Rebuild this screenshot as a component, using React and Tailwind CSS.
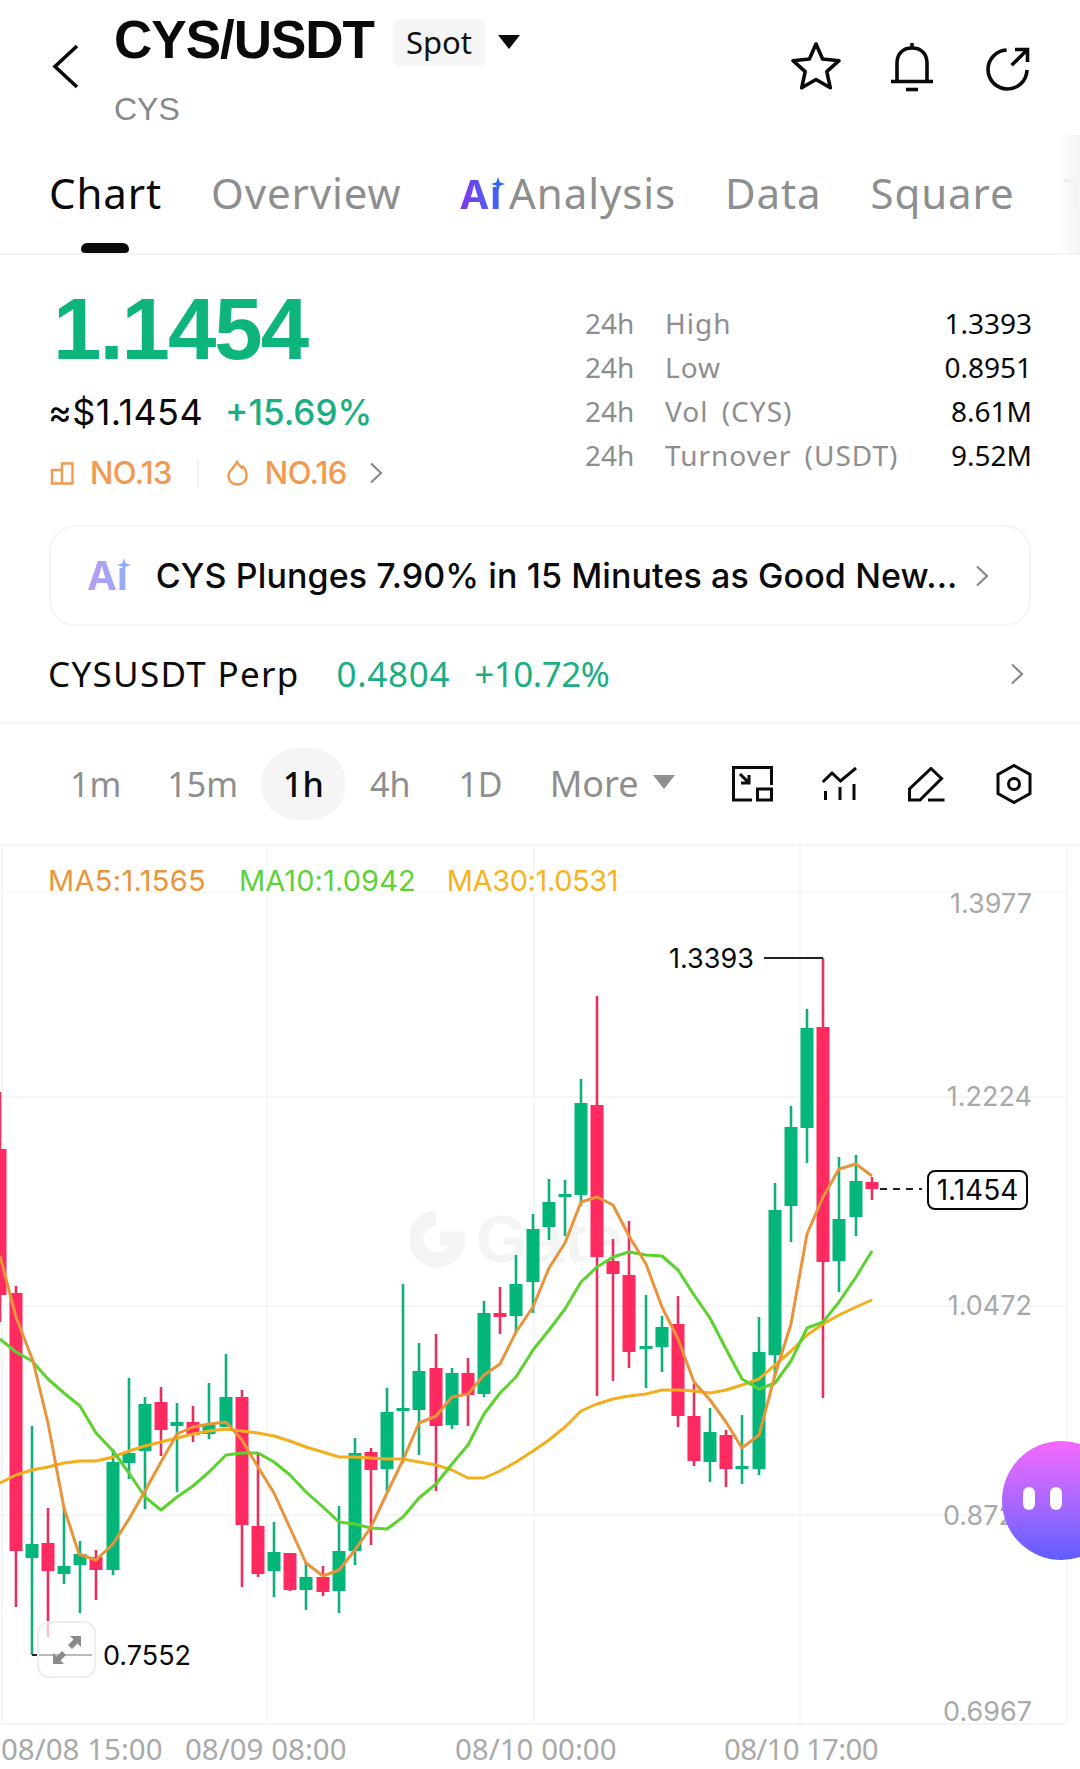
import React from 'react';

/* ─── Chart data (page coordinates) ─────────────────────────── */
// x, wick top, body top, body bottom, wick bottom, colour
const CANDLES = [
  [0, 1092, 1149, 1295, 1322, 'r'], [16, 1286, 1293, 1551, 1607, 'r'], [32, 1426, 1544, 1558, 1655, 'g'],
  [48, 1508, 1543, 1571, 1637, 'r'], [64, 1508, 1566, 1574, 1584, 'g'], [80, 1541, 1554, 1565, 1613, 'g'],
  [96, 1550, 1557, 1570, 1600, 'r'], [113, 1449, 1462, 1570, 1575, 'g'], [129, 1378, 1453, 1463, 1479, 'g'],
  [145, 1397, 1404, 1451, 1509, 'g'], [161, 1387, 1402, 1430, 1456, 'r'], [177, 1403, 1422, 1426, 1492, 'g'],
  [193, 1406, 1422, 1435, 1442, 'r'], [209, 1383, 1425, 1434, 1439, 'g'], [226, 1354, 1397, 1427, 1427, 'g'],
  [242, 1390, 1397, 1525, 1587, 'r'], [258, 1453, 1526, 1574, 1577, 'r'], [274, 1522, 1552, 1571, 1597, 'g'],
  [290, 1553, 1553, 1590, 1591, 'r'], [306, 1563, 1577, 1590, 1610, 'g'], [323, 1566, 1577, 1592, 1596, 'r'],
  [339, 1506, 1551, 1591, 1613, 'g'], [355, 1438, 1453, 1551, 1565, 'g'], [371, 1448, 1452, 1470, 1545, 'r'],
  [387, 1388, 1412, 1469, 1491, 'g'], [403, 1284, 1408, 1410, 1463, 'g'], [419, 1343, 1371, 1410, 1455, 'g'],
  [436, 1334, 1368, 1426, 1491, 'r'], [452, 1368, 1373, 1425, 1429, 'g'], [468, 1358, 1373, 1395, 1426, 'r'],
  [484, 1301, 1313, 1394, 1397, 'g'], [500, 1287, 1313, 1317, 1334, 'r'], [516, 1255, 1284, 1316, 1332, 'g'],
  [533, 1214, 1229, 1282, 1313, 'g'], [549, 1179, 1202, 1227, 1240, 'g'], [565, 1180, 1194, 1197, 1236, 'g'],
  [581, 1079, 1103, 1195, 1206, 'g'], [597, 996, 1105, 1257, 1396, 'r'], [613, 1239, 1261, 1274, 1381, 'r'],
  [629, 1221, 1275, 1352, 1368, 'r'], [646, 1295, 1346, 1349, 1388, 'g'], [662, 1316, 1327, 1347, 1372, 'g'],
  [678, 1296, 1324, 1416, 1427, 'r'], [694, 1384, 1416, 1461, 1466, 'r'], [710, 1408, 1432, 1462, 1482, 'g'],
  [726, 1430, 1435, 1469, 1487, 'r'], [742, 1415, 1466, 1468, 1484, 'g'], [759, 1317, 1352, 1469, 1475, 'g'],
  [775, 1183, 1210, 1355, 1376, 'g'], [791, 1106, 1127, 1206, 1242, 'g'], [807, 1009, 1028, 1128, 1163, 'g'],
  [823, 958, 1027, 1262, 1398, 'r'], [839, 1157, 1219, 1261, 1292, 'g'], [856, 1155, 1181, 1217, 1236, 'g'],
  [872, 1177, 1182, 1189, 1200, 'r'],
];

const MA5 = '0,1256 16,1317 33,1361 48,1423 64,1508 79,1554 96,1560 113,1544 129,1519 145,1491 161,1462 177,1434 193,1427 209,1424 226,1422 242,1440 258,1467 274,1493 290,1528 306,1563 323,1576 339,1570 355,1550 371,1527 387,1493 403,1460 419,1423 436,1416 452,1397 468,1394 484,1375 500,1364 516,1332 533,1307 549,1268 565,1243 581,1202 597,1197 613,1205 629,1236 646,1264 662,1307 678,1339 694,1382 710,1400 726,1422 742,1448 759,1435 775,1375 791,1324 807,1234 823,1197 839,1169 856,1164 872,1176';
const MA10 = '0,1339 16,1352 32,1361 48,1379 64,1393 80,1406 96,1433 113,1451 129,1473 145,1497 161,1510 177,1497 193,1486 209,1472 226,1455 242,1453 258,1453 274,1462 290,1475 306,1492 323,1507 339,1522 355,1524 371,1528 387,1529 403,1517 419,1498 436,1484 452,1464 468,1445 484,1414 500,1393 516,1377 533,1350 549,1330 565,1309 581,1282 597,1267 613,1257 629,1252 646,1255 662,1256 678,1270 694,1295 710,1318 726,1349 742,1379 759,1389 775,1383 791,1361 807,1328 823,1322 839,1302 856,1277 872,1251';
const MA30 = '0,1483 16,1475 32,1470 48,1467 64,1463 80,1461 96,1461 113,1457 129,1451 145,1446 161,1442 177,1438 193,1434 209,1431 226,1429 242,1431 258,1433 274,1436 290,1441 306,1447 323,1452 339,1457 355,1457 371,1458 387,1459 403,1459 419,1462 436,1465 452,1470 468,1478 484,1478 500,1471 516,1462 533,1451 549,1440 565,1427 581,1411 597,1404 613,1399 629,1396 646,1394 662,1390 678,1390 694,1391 710,1393 726,1390 742,1385 759,1379 775,1365 791,1351 807,1335 823,1324 839,1315 856,1307 872,1300';

const TABS = ['Chart', 'Overview', 'Analysis', 'Data', 'Square', 'T'];
const STATS = [
  ['High', '1.3393'],
  ['Low', '0.8951'],
  ['Vol (CYS)', '8.61M'],
  ['Turnover (USDT)', '9.52M'],
];

/* ─── Icons ─────────────────────────────────────────────────── */
const Chevron = ({ className }) => (
  <svg className={className} width="14" height="22" viewBox="0 0 14 22" fill="none" stroke="currentColor" strokeWidth="2.2">
    <path d="M2 1.5 L12 11 L2 20.5" />
  </svg>
);

const StarIcon = () => (
  <svg width="52" height="50" viewBox="0 0 52 50" fill="none" stroke="#0a0a0a" strokeWidth="3.6" strokeLinejoin="round">
    <path d="M26 3 L32.6 18 L49 19.7 L36.8 30.7 L40.3 46.8 L26 38.5 L11.7 46.8 L15.2 30.7 L3 19.7 L19.4 18 Z" />
  </svg>
);
const BellIcon = () => (
  <svg width="44" height="50" viewBox="0 0 44 50" fill="none" stroke="#0a0a0a" strokeWidth="3.6">
    <path d="M7 39 V21 C7 11.500 13 6 22 6 C31 6 37 11.500 37 21 V39" />
    <path d="M1 39.500 H43 M22 1 V6" />
    <path d="M16 47.500 H28" />
  </svg>
);
const ShareIcon = () => (
  <svg width="44" height="44" viewBox="0 0 44 44" fill="none" stroke="#0a0a0a" strokeWidth="3.6">
    <path d="M20.600 3 A19.500 19.500 0 1 0 41 23" />
    <path d="M25.600 18.300 L41 3 M29 2.500 H41.500 V15" />
  </svg>
);

const LayoutIcon = () => (
  <svg width="42" height="36" viewBox="0 0 42 36" fill="none" stroke="#0a0a0a" strokeWidth="3">
    <path d="M20 34 H1.500 V1.500 H39.500 V19" />
    <rect x="25.500" y="23" width="14" height="11" />
    <path d="M8 8 L17 17 M9 17 H17 V9" />
  </svg>
);
const IndicatorIcon = () => (
  <svg width="36" height="35" viewBox="0 0 36 35" fill="none" stroke="#0a0a0a" strokeWidth="3">
    <path d="M0.800 15 L10 6 L18.500 14 L34 1" />
    <path d="M3.500 24 V33 M18 20 V33 M32 17 V33" />
  </svg>
);
const PencilIcon = () => (
  <svg width="37" height="35" viewBox="0 0 37 35" fill="none" stroke="#0a0a0a" strokeWidth="3">
    <path d="M23 1.500 L33.500 11.500 L12 33 H1.500 V22 Z" />
    <path d="M20 33 H36.500" />
  </svg>
);
const HexIcon = () => (
  <svg width="36" height="40" viewBox="0 0 36 40" fill="none" stroke="#0a0a0a" strokeWidth="3">
    <path d="M18 1.500 L34 10.500 V29.500 L18 38.500 L2 29.500 V10.500 Z" />
    <circle cx="18" cy="20" r="5.500" />
  </svg>
);

const RankIcon = () => (
  <svg width="24" height="23" viewBox="0 0 24 23" fill="none" stroke="#f2984f" strokeWidth="2.4">
    <path d="M12 8 H2 V21.500 H22.500 V1.500 H12 V21.500" />
  </svg>
);
const FlameIcon = () => (
  <svg width="21" height="26" viewBox="0 0 21 26" fill="none" stroke="#f2984f" strokeWidth="2.4" strokeLinejoin="round">
    <path d="M10 1.500 C11 5 13.500 6 15 8 C15.800 7.500 16 7 16 6.500 C18.500 9 19.500 12 19.500 15.500 C19.500 21 15.500 24.500 10.500 24.500 C5.500 24.500 1.500 21 1.500 15.800 C1.500 11 5 9.500 7 6.500 C8 5 9.500 3.500 10 1.500 Z" />
  </svg>
);

const Caret = ({ className }) => (
  <svg className={className} width="22" height="14" viewBox="0 0 22 14" fill="currentColor">
    <path d="M0 0 H22 L11 14 Z" />
  </svg>
);

const AiBadge = ({ soft }) => (
  <span className="relative inline-block font-['Inter',sans-serif] font-bold text-[40px] leading-none">
    <span className={`bg-clip-text text-transparent bg-linear-to-r ${soft ? 'from-[#b79af2] to-[#93aef8]' : 'from-[#7b35e8] to-[#2f66f5]'}`}>Aı</span>
    <svg className="absolute right-[-3px] top-[2px]" width="14" height="14" viewBox="0 0 16 16" fill={soft ? '#8fb0f8' : '#2f66f5'}>
      <path d="M8 0 L10 6 L16 8 L10 10 L8 16 L6 10 L0 8 L6 6 Z" />
    </svg>
  </span>
);

/* ─── Header ────────────────────────────────────────────────── */
const Header = () => (
  <div className="h-[135px] flex items-start pl-[52px] pr-[50px]">
    <svg className="mt-[44px] shrink-0" width="27" height="45" viewBox="0 0 27 45" fill="none" stroke="#0a0a0a" strokeWidth="3.6">
      <path d="M25 2 L3 22.500 L25 43" />
    </svg>
    <div className="ml-[35px] flex-1">
      <div className="flex items-start">
        <span className="font-['Liberation_Sans',sans-serif] font-bold text-[53px] leading-[60px] tracking-[-1px] mt-[10px] text-[#0a0a0a]">CYS/USDT</span>
        <span className="ml-[19px] mt-[19px] w-[92px] h-[47px] rounded-md bg-[#f5f5f5] flex items-center justify-center font-['Noto_Sans',sans-serif] text-[31px] text-[#111]">Spot</span>
        <Caret className="ml-[13px] mt-[35px] text-[#0a0a0a]" />
      </div>
      <div className="font-['Liberation_Sans',sans-serif] text-[32px] leading-[36px] mt-[21px] text-[#888888]">CYS</div>
    </div>
    <div className="flex items-start mt-[42px]">
      <span className="-mt-[1px]"><StarIcon /></span>
      <span className="ml-[48px]"><BellIcon /></span>
      <span className="ml-[52px] mt-[5px]"><ShareIcon /></span>
    </div>
  </div>
);

const Tabs = () => (
  <div className="relative h-[120px] border-b-2 border-[#f3f3f3] overflow-hidden">
    <div className="flex items-center gap-[49px] pl-[49px] pt-[28px] font-['Noto_Sans',sans-serif] text-[42px] tracking-[0.9px] leading-[60px] whitespace-nowrap text-[#8e8e8e]">
      {TABS.map(t => (
        <span key={t} className={`flex items-center ${t === 'Chart' ? 'text-[#0a0a0a]' : ''}`}>
          {t === 'Analysis' && <span className="mr-[7px] ml-[9px]"><AiBadge /></span>}
          {t}
        </span>
      ))}
    </div>
    <div className="absolute left-[81px] bottom-0 w-[48px] h-[10px] rounded-t-md rounded-b-sm bg-[#0a0a0a]" />
    <div className="absolute right-0 top-0 bottom-0 w-[24px] bg-linear-to-r from-[#ffffffcc] to-[#f4f4f4]" />
  </div>
);

/* ─── Price block ───────────────────────────────────────────── */
const PriceBlock = () => (
  <div className="h-[270px] flex pl-[50px] pr-[48px]">
    <div className="w-[535px] shrink-0">
      <div className="font-['Liberation_Sans',sans-serif] font-bold text-[87px] leading-[80px] tracking-[-2px] text-[#0db57d] mt-[34px] ml-[3px]">1.1454</div>
      <div className="flex items-baseline -ml-[2px] mt-[21px] font-['Inter',sans-serif] text-[36px] leading-[44px]">
        <span className="text-[#0a0a0a] tracking-[0.4px]">≈$1.1454</span>
        <span className="ml-[22px] text-[#1aae82] font-medium text-[35px]">+15.69%</span>
      </div>
      <div className="flex items-center mt-[22px] font-['Inter',sans-serif] font-medium text-[31px] leading-[34px] tracking-[-0.6px] text-[#f2984f]">
        <RankIcon />
        <span className="ml-[16px]">NO.13</span>
        <span className="ml-[25px] w-[2px] h-[28px] bg-[#f3f3f3]" />
        <span className="ml-[28px]"><FlameIcon /></span>
        <span className="ml-[17px]">NO.16</span>
        <Chevron className="ml-[22px] text-[#888]" />
      </div>
    </div>
    <div className="flex-1 pt-[46px] font-['Noto_Sans',sans-serif] text-[28px] leading-[44px]">
      {STATS.map(([label, value]) => (
        <div key={label} className="flex">
          <span className="w-[80px] text-[#8e8e8e]">24h</span>
          <span className="flex-1 text-[#8e8e8e] tracking-[1px] [word-spacing:5px]">{label}</span>
          <span className="text-[#0a0a0a]">{value}</span>
        </div>
      ))}
    </div>
  </div>
);

const NewsCard = () => (
  <div className="mx-[49px] h-[101px] rounded-[26px] border-2 border-[#f5f5f5] flex items-center pl-[36px] pr-[40px]">
    <AiBadge soft />
    <span className="ml-[28px] flex-1 font-['Inter',sans-serif] font-medium text-[34px] tracking-[0.1px] text-[#0a0a0a] whitespace-nowrap">CYS Plunges 7.90% in 15 Minutes as Good New...</span>
    <Chevron className="text-[#888]" />
  </div>
);

const PerpRow = () => (
  <div className="h-[98px] flex items-center pl-[48px] pr-[56px] border-b-2 border-[#f3f3f3] font-['Noto_Sans',sans-serif] text-[35px]">
    <span className="text-[#0a0a0a] tracking-[1.3px]">CYSUSDT Perp</span>
    <span className="ml-[37px] text-[#1aae82] tracking-[0.7px]">0.4804</span>
    <span className="ml-[24px] text-[#1aae82] tracking-[-0.5px]">+10.72%</span>
    <Chevron className="ml-auto text-[#888]" />
  </div>
);

/* ─── Timeframe toolbar ─────────────────────────────────────── */
const Toolbar = () => (
  <div className="h-[122px] flex items-center pl-[70px] pr-[40px] border-b-2 border-[#f3f3f3] font-['Noto_Sans',sans-serif] text-[34px] text-[#8e8e8e]">
    <span>1m</span>
    <span className="ml-[46px]">15m</span>
    <span className="ml-[23px] shrink-0 w-[85px] h-[72px] rounded-full bg-[#f5f5f5] flex items-center justify-center text-[#0a0a0a] font-medium">1h</span>
    <span className="ml-[24px]">4h</span>
    <span className="ml-[48px]">1D</span>
    <span className="ml-[47px] text-[36px]">More</span>
    <Caret className="ml-[14px] mb-[4px] text-[#8e8e8e]" />
    <span className="ml-[57px]"><LayoutIcon /></span>
    <span className="ml-[48px]"><IndicatorIcon /></span>
    <span className="ml-[50px]"><PencilIcon /></span>
    <span className="ml-[51px]"><HexIcon /></span>
  </div>
);

/* ─── Chart ─────────────────────────────────────────────────── */
const Candle = ({ c }) => {
  const [x, top, bodyTop, bodyBot, bot, dir] = c;
  const fill = dir === 'g' ? '#05b67a' : '#ff2a5f';
  const wick = dir === 'g' ? '#10b07c' : '#e8305f';
  return (
    <g>
      <line x1={x} x2={x} y1={top} y2={bot} stroke={wick} strokeWidth="2.600" />
      <rect x={x - 6.500} y={bodyTop} width="13" height={Math.max(bodyBot - bodyTop, 3)} fill={fill} />
    </g>
  );
};

const axisLabel = "absolute right-[48px] font-['Inter',sans-serif] text-[27px] leading-[34px] text-[#a9a9a9]";
const timeLabel = "absolute top-[886px] font-['Noto_Sans',sans-serif] text-[29.5px] leading-[34px] text-[#a9a9a9] whitespace-nowrap";

const Chart = () => (
  <div className="relative flex-1 overflow-hidden">
    {/* watermark sits under the candles */}
    <div className="absolute left-[410px] top-[360px] flex items-center text-[#f3f5f5]">
      <svg width="56" height="58" viewBox="0 0 56 58" fill="none" stroke="currentColor" strokeWidth="15">
        <path d="M26 8 A21 21 0 1 0 48 29 H30" />
      </svg>
      <span className="ml-[10px] font-['Liberation_Sans',sans-serif] font-bold text-[66px] leading-[66px]">Gate</span>
    </div>

    <svg className="absolute inset-0" width="1080" height="923" viewBox="0 846 1080 923" fill="none">
      <line x1="0" x2="1067" y1="892" y2="892" stroke="#fafafa" strokeWidth="2" />
      {[1097, 1306, 1515, 1724].map(y => (
        <line key={y} x1="0" x2="1067" y1={y} y2={y} stroke="#f5f5f5" strokeWidth="2" />
      ))}
      {[2, 267, 534, 800, 1067].map(x => (
        <line key={x} x1={x} x2={x} y1="846" y2="1724" stroke="#f6f6f6" strokeWidth="2" />
      ))}
      {CANDLES.map(c => <Candle key={c[0]} c={c} />)}
      <polyline points={MA30} stroke="#f3ae1e" strokeWidth="3" strokeLinejoin="round" />
      <polyline points={MA10} stroke="#5cd22f" strokeWidth="3" strokeLinejoin="round" />
      <polyline points={MA5} stroke="#e8943a" strokeWidth="3" strokeLinejoin="round" />
      <path d="M764 958 H823" stroke="#222" strokeWidth="2" />
      <path d="M32 1655 H92" stroke="#222" strokeWidth="2" />
      <path d="M880 1189 H922" stroke="#222" strokeWidth="2" strokeDasharray="7 6" />
    </svg>

    <div className="absolute left-[48px] top-[17px] flex font-['Inter',sans-serif] text-[29px] leading-[36px] tracking-[0.3px]">
      <span className="text-[#e8963a]">MA5:1.1565</span>
      <span className="ml-[33px] tracking-[0.1px] text-[#5fd13b]">MA10:1.0942</span>
      <span className="ml-[31px] tracking-[-0.4px] text-[#f5b41f]">MA30:1.0531</span>
    </div>

    <span className={`${axisLabel} top-[41px]`}>1.3977</span>
    <span className={`${axisLabel} top-[234px]`}>1.2224</span>
    <span className={`${axisLabel} top-[443px]`}>1.0472</span>
    <span className={`${axisLabel} top-[653px]`}>0.8720</span>
    <span className={`${axisLabel} top-[849px]`}>0.6967</span>

    <span className="absolute left-[669px] top-[96px] font-['Inter',sans-serif] text-[27px] leading-[34px] text-[#0a0a0a]">1.3393</span>
    <span className="absolute left-[103px] top-[793px] font-['Inter',sans-serif] text-[27px] leading-[34px] text-[#0a0a0a]">0.7552</span>

    <div className="absolute left-[927px] top-[324px] w-[101px] h-[40px] rounded-lg border-2 border-[#0a0a0a] bg-white flex items-center justify-center font-['Inter',sans-serif] text-[28px] text-[#0a0a0a]">1.1454</div>

    <div className="absolute left-[37px] top-[775px] w-[59px] h-[57px] rounded-xl border-2 border-[#eeeeee] bg-[#ffffffb0] flex items-center justify-center">
      <svg width="30" height="30" viewBox="0 0 30 30" fill="#8a8a8a">
        <path d="M18 1 H29 V12 L25.500 8.500 L20 14 L16 10 L21.500 4.500 Z" />
        <path d="M12 29 H1 V18 L4.500 21.500 L10 16 L14 20 L8.500 25.500 Z" />
      </svg>
    </div>

    <div className="absolute left-[1002px] top-[595px] w-[119px] h-[119px] rounded-full bg-linear-to-b from-[#f567ff] to-[#5e5cff] flex">
      <span className="absolute left-[21px] top-[46px] w-[12px] h-[23px] rounded-full bg-white" />
      <span className="absolute left-[48px] top-[46px] w-[12px] h-[23px] rounded-full bg-white" />
    </div>

    <span className={`${timeLabel} left-[1px]`}>08/08 15:00</span>
    <span className={`${timeLabel} left-[185px]`}>08/09 08:00</span>
    <span className={`${timeLabel} left-[455px]`}>08/10 00:00</span>
    <span className={`${timeLabel} left-[724px] tracking-[-0.7px]`}>08/10 17:00</span>
  </div>
);

export default function App() {
  return (
    <div className="w-[1080px] h-[1769px] bg-white flex flex-col overflow-hidden">
      <Header />
      <Tabs />
      <PriceBlock />
      <NewsCard />
      <PerpRow />
      <Toolbar />
      <Chart />
    </div>
  );
}
